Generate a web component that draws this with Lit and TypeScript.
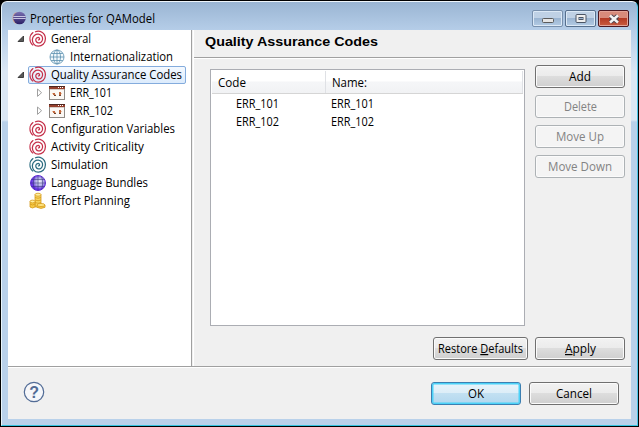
import { LitElement, html, css, svg } from "lit";
import { customElement, property } from "lit/decorators.js";

@customElement("fit-text")
class FitText extends LitElement {
  @property() text = "";
  @property({ type: Number }) w = 50;
  @property() key = "";
  @property({ type: Number }) size = 12;
  @property({ type: Boolean }) bold = false;
  static styles = css`
    :host { display: block; flex: none; height: 18px; }
    svg { display: block; overflow: visible; }
    text { fill: currentColor; font-family: "Open Sans", "Noto Sans", sans-serif; }
    .bold { font-family: "Liberation Sans", Arial, sans-serif; font-weight: 700; }
    .key { text-decoration: underline; }
  `;
  render() {
    const i = this.key ? this.text.indexOf(this.key) : -1;
    const body = i < 0 ? this.text
      : svg`${this.text.slice(0, i)}<tspan class="key">${this.key}</tspan>${this.text.slice(i + 1)}`;
    return html`<svg width=${this.w} height="18"><text class=${this.bold ? "bold" : ""} x="0" y="13"
      font-size=${this.size} textLength=${this.w} lengthAdjust="spacingAndGlyphs">${body}</text></svg>`;
  }
}

const swirl = (c: string) => html`<svg width="18" height="18" viewBox="0 0 18 18" fill="none" stroke=${c} stroke-width="1.25" stroke-linecap="round">
  <path d="M6.500 1.800C10.500 0 16.300 2.600 16.400 8.600C16.500 13.600 12.800 16.300 9.200 16.200C5.300 16.100 3.200 12.800 3.400 9.400C3.600 6 6.500 3.900 9.400 4.200C12.300 4.500 13.900 6.900 13.500 9.500C13.200 11.900 11.200 13.300 9.300 12.900C7.300 12.500 6.400 10.500 7 8.900C7.600 7.400 9.700 7 10.400 8.200C10.900 9.200 10.300 10 9.500 9.900"/>
  <path d="M4 2.500C0 5.500-.2 11.800 3.800 15.200" stroke-width="1.050"/></svg>`;
const globe = html`<svg width="16" height="16" viewBox="0 0 16 16" fill="#f2f9fc" stroke="#5b8fae" stroke-width=".8">
  <circle cx="8" cy="8" r="7"/><ellipse cx="8" cy="8" rx="3.500" ry="7" fill="none"/><path d="M8 1v14M1 8h14M2.200 4.500h11.600M2.200 11.500h11.600"/></svg>`;
const purple = html`<svg width="18" height="18" viewBox="0 0 18 18">
  <defs><radialGradient id="g" cx=".6" cy=".42"><stop offset="0" stop-color="#f2f2fb"/><stop offset=".5" stop-color="#b3b3e4"/><stop offset="1" stop-color="#6a34e6"/></radialGradient></defs>
  <circle cx="9" cy="9" r="7.500" fill="url(#g)" stroke="#5a22d6" stroke-width=".9"/>
  <path d="M9 1.500v15M1.500 9h15M2.500 5.500h13M2.500 12.500h13M5.500 2.500C4 6 4 12 5.500 15.500M12.500 2.500C14 6 14 12 12.500 15.500" fill="none" stroke="#35307c" stroke-width=".55"/></svg>`;
const coins = html`<svg width="18" height="18" viewBox="0 0 18 18" stroke="#d69a1c" stroke-width=".8">
  <path d="M6 2.500v12.500h6V2.500z" fill="#f8d660"/><ellipse cx="9" cy="2.700" rx="3" ry="1.500" fill="#fff0a0"/>
  <path d="M6 5.500q3 1.500 6 0M6 8q3 1.500 6 0M6 10.500q3 1.500 6 0" fill="none"/>
  <path d="M1 9.500v5.500q2.500 2 5 0V9.500z" fill="#f6ca45"/><ellipse cx="3.500" cy="9.500" rx="2.500" ry="1.400" fill="#fff0a0"/><path d="M1 12q2.500 2 5 0" fill="none"/>
  <path d="M8 13v2.300q4 2.300 8 0V13z" fill="#f6ca45"/><ellipse cx="12" cy="13" rx="4" ry="1.500" fill="#ffe684"/></svg>`;
const form = html`<svg width="16" height="14" viewBox="0 0 16 14" shape-rendering="crispEdges">
  <path d="M.5 .5h15v13H.5z" fill="#fbf8f5" stroke="#8f8a86"/><path d="M0 0h16v1H0z" fill="#4d2620"/><path d="M0 1h16v2H0z" fill="#96402c"/><path d="M1 3h14v1H1z" fill="#d9cdc6"/>
  <path d="M9 1h1v1H9zM11 1h1v1h-1zM13 1h1v1h-1z" fill="#fff"/>
  <path d="M4 7h2v2H4zM10 6h2v3h-2z" fill="#c2683f"/><path d="M5 9h2v1H5zM10 9h2v1h-2z" fill="#70442f"/><path d="M3 7h1v1H3zM12 7h1v1h-1zM6 8h1v1H6z" fill="#eebf9c"/></svg>`;
const eclipse = html`<svg width="14" height="14" viewBox="0 0 14 14">
  <defs><linearGradient id="e" x2="0" y2="1"><stop offset="0" stop-color="#7a70b2"/><stop offset="1" stop-color="#2a1f66"/></linearGradient></defs>
  <path d="M4.500 1A6.500 6.500 0 0 0 4.500 13" fill="#d9a58a"/><circle cx="7.500" cy="7" r="6.300" fill="url(#e)"/><path d="M1.300 5.500h12.400M1.300 7.500h12.400" stroke="#d6d4ec" stroke-width=".9"/></svg>`;
const open = html`<svg width="8" height="8"><path d="M6.500 1v5.500H1z" fill="#595959" stroke="#262626" stroke-width=".8"/></svg>`;
const closed = html`<svg width="8" height="10"><path d="M1.500 1v7.400L5.600 4.700z" fill="#fff" stroke="#a0a0a0"/></svg>`;

const red = "#c5304a";
const nodes: any[] = [
  ["General", 40, 0, open, swirl(red)],
  ["Internationalization", 103, 1, null, globe],
  ["Quality Assurance Codes", 131, 0, open, swirl(red), true],
  ["ERR_101", 42, 1, closed, form],
  ["ERR_102", 43, 1, closed, form],
  ["Configuration Variables", 124, 0, null, swirl(red)],
  ["Activity Criticality", 93, 0, null, swirl(red)],
  ["Simulation", 57, 0, null, swirl("#2c6c80")],
  ["Language Bundles", 97, 0, null, purple],
  ["Effort Planning", 79, 0, null, coins],
];

@customElement("app-root")
class AppRoot extends LitElement {
  static styles = css`
    :host { display: block; width: 639px; height: 427px; background: #000; color: #000; overflow: hidden; }
    * { box-sizing: border-box; }
    svg { display: block; flex: none; }
    .window { width: 637px; height: 425px; margin-left: 1px; display: flex; flex-direction: column;
      border: 1px solid #35c4e0; border-left-color: #e9f5fb; border-top-color: #eef5fb; border-right-color: #4cc5e8; border-radius: 6px 6px 0 0;
      background: linear-gradient(#9ab5d3, #b5cde8 28px, #dbe7f4 70px, #dbe7f4 118px, #b9d1ea 120px); padding: 0 6px 6px; }
    .frame { padding-top: 1px; }
    .title { height: 28px; display: flex; flex: none; align-items: flex-start; padding-left: 4px; }
    .title fit-text { margin: 8px 0 0 4px; }
    .logo { margin-top: 9px; }
    .caption { display: flex; gap: 2px; margin: 8px 2px 0 auto; }
    .cap { width: 31px; height: 17px; border: 1px solid #566f8d; border-radius: 2px; box-shadow: inset 0 0 0 1px #dce9f6;
      background: linear-gradient(#bfd1e5 48%, #9bb5d2 50%, #b3cbe4); display: grid; place-items: center; }
    .cap.min { border-color: #7890ad; padding-top: 4px; }
    .cap.close { border-color: #4b1720; box-shadow: inset 0 0 0 1px #e3a397; background: linear-gradient(#d88b7b 45%, #b43b25 50%, #c95c40); }
    .body { flex: 1; display: flex; flex-direction: column; background: #f0f0f0; min-height: 0; }
    .main { height: 336px; flex: none; display: flex; }
    .tree { width: 184px; background: #fff; border-right: 1px solid #a0a0a0; display: flex; flex-direction: column; flex: none; }
    .node { height: 18px; display: flex; align-items: center; padding-left: 9px; flex: none; }
    .node.child { padding-left: 28px; }
    .arrow { width: 11px; flex: none; }
    .item { display: flex; align-items: center; height: 18px; padding: 0 3px 0 1px; border: 1px solid transparent; border-radius: 2px; }
    .child .item { padding-left: 1px; }
    .icon { width: 21px; display: flex; flex: none; margin-left: -1px; margin-right: 1px; }
    .child .icon { margin: 0; }
    .item.sel { background: linear-gradient(#f4f9ff, #dcebfc); border-color: #84acdd; }
    .page { flex: 1; border-left: 1px solid #fff; margin-left: 1px; display: flex; flex-direction: column; }
    .heading { height: 28px; border-bottom: 1px solid #a0a0a0; box-shadow: 0 1px #fff; padding: 3px 0 0 11px; flex: none; }
    .content { display: flex; gap: 10px; padding: 11px 0 0 16px; }
    .table { width: 315px; height: 257px; border: 1px solid #abadb3; background: #fff; }
    .head { height: 23px; margin: 1px; display: flex; background: linear-gradient(#fff 45%, #f5f6f8 50%, #f1f2f4); border-bottom: 1px solid #d5d5d5; }
    .col { width: 114px; border-right: 1px solid #dfe1e5; padding: 3px 0 0 6px; }
    .col.wide { width: 197px; }
    .row { display: flex; height: 18px; padding-left: 25px; } .row fit-text:first-child { margin-right: 52px; }
    .buttons { display: flex; flex-direction: column; gap: 7px; margin-top: -4px; }
    .btn { width: 90px; height: 23px; border: 1px solid #707070; border-radius: 3px; box-shadow: inset 0 0 0 1px #fbfbfb;
      background: linear-gradient(#f2f2f2, #ebebeb 49%, #dddddd 50%, #cfcfcf); display: flex; justify-content: center; padding-top: 2px; }
    .btn.off { color: #838383; border-color: #adb2b5; background: #f4f4f4; }
    .btn.wide { width: 95px; }
    .btn.ok { border-color: #3c7fb1; box-shadow: inset 0 0 0 1.500px #4bd2f8; background: linear-gradient(#e9f4fb, #dcedf7 49%, #c2e0f2 50%, #b2d7ee); }
    .actions { display: flex; gap: 7px; justify-content: flex-end; padding: 11px 6px 0 0; }
    .foot { flex: 1; border-top: 1px solid #a0a0a0; box-shadow: inset 0 1px #fff; display: flex; padding: 15px 12px 0 15px; gap: 8px; }
    .foot .help { margin-top: -1px; margin-right: auto; }
    .help text { font: 700 16px "Liberation Sans", Arial, sans-serif; fill: #526c96; }
  `;
  btn(t: string, w: number, cls = "", key = "") {
    return html`<div class="btn ${cls}"><fit-text .text=${t} .w=${w} .key=${key}></fit-text></div>`;
  }
  render() {
    return html`<div class="frame"><div class="window">
      <div class="title"><div class="logo">${eclipse}</div><fit-text text="Properties for QAModel" w="125"></fit-text>
        <div class="caption">
          <div class="cap min"><svg width="12" height="5"><rect x=".5" y=".5" width="11" height="4" rx="1" fill="#e5e5e5" stroke="#5b5b5b"/></svg></div>
          <div class="cap"><svg width="12" height="9"><rect x="1" y=".5" width="10" height="8" rx="1" fill="#eee" stroke="#4b5565"/><rect x="4" y="3.500" width="4" height="2" fill="#9ab3d0" stroke="#4b5565"/></svg></div>
          <div class="cap close"><svg width="12" height="10" fill="none"><path d="M2.500 2l7 6M9.500 2l-7 6" stroke="#4d4550" stroke-width="4.400"/><path d="M2 1.500l8 7M10 1.500l-8 7" stroke="#f4f4f4" stroke-width="2.400"/></svg></div>
        </div></div>
      <div class="body">
        <div class="main">
          <div class="tree">${nodes.map(([t, w, d, a, icon, sel]) => html`<div class="node ${d ? "child" : ""}">
            <div class="arrow">${a}</div><div class="item ${sel ? "sel" : ""}"><div class="icon">${icon}</div><fit-text .text=${t} .w=${w}></fit-text></div></div>`)}</div>
          <div class="page">
            <div class="heading"><fit-text text="Quality Assurance Codes" w="173" size="12.500" bold></fit-text></div>
            <div class="content">
              <div class="table">
                <div class="head"><div class="col"><fit-text text="Code" w="28"></fit-text></div><div class="col wide"><fit-text text="Name:" w="35"></fit-text></div></div>
                ${["ERR_101", "ERR_102"].map((t) => html`<div class="row"><fit-text .text=${t} .w=${43}></fit-text><fit-text .text=${t} .w=${43}></fit-text></div>`)}
              </div>
              <div class="buttons">${this.btn("Add", 22)}${this.btn("Delete", 33, "off")}${this.btn("Move Up", 48, "off")}${this.btn("Move Down", 64, "off")}</div>
            </div>
            <div class="actions">${this.btn("Restore Defaults", 85, "wide", "D")}${this.btn("Apply", 31, "", "A")}</div>
          </div>
        </div>
        <div class="foot"><svg class="help" width="22" height="22"><circle cx="11" cy="11" r="9.700" fill="#f6f7fa" stroke="#526c96" stroke-width="1.200"/><text x="6.200" y="16.500">?</text></svg>
          ${this.btn("OK", 16, "ok")}${this.btn("Cancel", 36)}</div>
      </div></div></div>`;
  }
}
